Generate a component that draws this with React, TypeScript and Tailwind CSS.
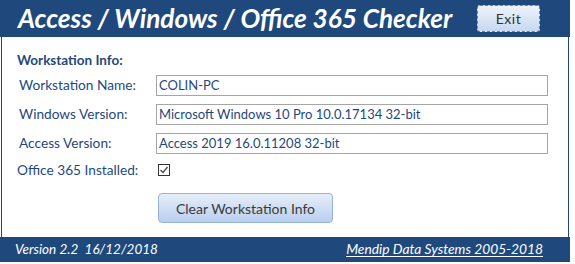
import React from "react";

const rows = [
  { label: "Workstation Name:", value: "COLIN-PC" },
  { label: "Windows Version:", value: "Microsoft Windows 10 Pro 10.0.17134 32-bit" },
  { label: "Access Version:", value: "Access 2019 16.0.11208 32-bit" },
];

export default function App() {
  return (
    <div className="w-[575px] h-[264px] bg-white" style={{ fontFamily: "Lato, 'Open Sans', sans-serif" }}>
      <div className="w-[570px] h-[262px] flex flex-col">
        {/* Header */}
        <div className="h-[37px] bg-[#1F497D] flex items-center shrink-0">
          <h1 className="ml-[18px] text-white text-[26.2px] font-bold italic leading-none">
            Access / Windows / Office 365 Checker
          </h1>
          <button className="ml-auto mr-[30px] w-[63px] h-[27px] rounded-[3px] border border-dashed border-[#6b7f99] bg-gradient-to-b from-[#eef3fb] to-[#c6d8f0] text-[14px] text-[#333] tracking-[0.5px]">
            Exit
          </button>
        </div>

        {/* Body */}
        <div className="flex-1 mx-[1px] border-x border-[#1F497D] pl-[15px] pt-[15px]">
          <div className="text-[13.5px] font-bold text-[#1F497D] leading-[16px]">Workstation Info:</div>

          <div className="mt-[7px] flex flex-col gap-[8px]">
            {rows.map((r) => (
              <div key={r.label} className="flex items-center h-[21px]">
                <span className="w-[139px] pl-[2px] text-[13.7px] text-[#1F497D]">{r.label}</span>
                <div className="w-[392px] h-[21px] border border-[#a5a5a5] flex items-center px-[2px] text-[13px] text-[#1F497D]">
                  {r.value}
                </div>
              </div>
            ))}
          </div>

          <div className="mt-[9px] flex items-center h-[14px]">
            <span className="w-[141px] text-[13.7px] text-[#1F497D]">Office 365 Installed:</span>
            <div className="w-[12px] h-[12px] border border-[#333] flex items-center justify-center">
              <svg width="10" height="10" viewBox="0 0 10 10">
                <path d="M1.5 5 L4 7.5 L8.5 2" stroke="#444" strokeWidth="1.2" fill="none" />
              </svg>
            </div>
          </div>

          <button className="mt-[16px] ml-[141px] w-[175px] h-[30px] rounded-[4px] border border-[#95b3d7] bg-gradient-to-b from-[#e6eefa] to-[#b9cfee] text-[14px] text-[#3a3a3a]">
            Clear Workstation Info
          </button>
        </div>

        {/* Footer */}
        <div className="h-[25px] bg-[#1F497D] flex items-center justify-between pl-[15px] pr-[27px] shrink-0 text-white italic">
          <span className="whitespace-pre text-[13.5px]">Version 2.2  16/12/2018</span>
          <span className="underline underline-offset-2 text-[13.8px]">Mendip Data Systems 2005-2018</span>
        </div>
      </div>
    </div>
  );
}
